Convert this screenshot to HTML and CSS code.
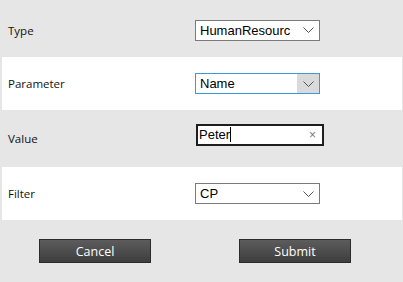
FILE: index.html
```html
<!DOCTYPE html>
<html lang="en">
<head>
  <meta charset="UTF-8">
  <title>Search Filter</title>
  <link rel="stylesheet" href="styles.css">
</head>
<body>
  <div class="panel">
    <div class="row">
      <span class="label">Type</span>
      <div class="select">
        <span class="select-text">HumanResourc</span>
        <span class="arrow">
          <svg width="11" height="6" viewBox="0 0 11 6"><path d="M0.5 0.5 L5.5 5.5 L10.5 0.5" fill="none" stroke="#555" stroke-width="1"/></svg>
        </span>
      </div>
    </div>

    <div class="row row-alt">
      <span class="label">Parameter</span>
      <div class="select select-focus">
        <span class="select-text">Name</span>
        <span class="arrow">
          <svg width="11" height="6" viewBox="0 0 11 6"><path d="M0.5 0.5 L5.5 5.5 L10.5 0.5" fill="none" stroke="#555" stroke-width="1"/></svg>
        </span>
      </div>
    </div>

    <div class="row row-tall">
      <span class="label">Value</span>
      <div class="textbox">
        <span class="textbox-value">Peter</span><span class="caret"></span>
        <span class="clear">&#215;</span>
      </div>
    </div>

    <div class="row row-alt">
      <span class="label">Filter</span>
      <div class="select">
        <span class="select-text">CP</span>
        <span class="arrow">
          <svg width="11" height="6" viewBox="0 0 11 6"><path d="M0.5 0.5 L5.5 5.5 L10.5 0.5" fill="none" stroke="#555" stroke-width="1"/></svg>
        </span>
      </div>
    </div>

    <div class="actions">
      <button class="btn">Cancel</button>
      <button class="btn">Submit</button>
    </div>
  </div>
</body>
</html>
```

FILE: styles.css
```css
body {
  margin: 0;
  background: #e6e6e6;
  font-family: 'Open Sans', 'Liberation Sans', sans-serif;
}

.panel {
  padding: 3px 1px 0 2px;
}

.row {
  display: grid;
  grid-template-columns: 187px auto;
  align-items: center;
  height: 54px;
  padding-left: 6px;
}

.row-alt {
  background: #fff;
  height: 53px;
}

.row-tall {
  height: 57px;
}

.label {
  font-size: 11.5px;
  color: #111;
}

/* fake dropdowns */
.select {
  display: flex;
  align-items: stretch;
  width: 123px;
  height: 19px;
  border: 1px solid #7a7a7a;
  background: #fff;
  font-family: 'Liberation Sans', Arial, sans-serif;
  font-size: 13px;
  color: #000;
}

.select-focus {
  border-color: #3a9ad9;
}

.select-text {
  flex: 1;
  overflow: hidden;
  white-space: nowrap;
  padding: 0 2px 0 4px;
  line-height: 19px;
}

.arrow {
  width: 22px;
  display: flex;
  align-items: center;
  justify-content: center;
}

.select-focus .arrow {
  background: #dadada;
}

/* text input */
.textbox {
  display: flex;
  align-items: center;
  width: 124px;
  height: 16px;
  margin-left: 1px;
  margin-top: -8px;
  border: 2px solid #1e1e1e;
  background: #fff;
  font-family: 'Liberation Sans', Arial, sans-serif;
  font-size: 13px;
  padding: 1px 0;
}

.textbox-value {
  padding-left: 1px;
}

.caret {
  width: 1px;
  height: 15px;
  background: #000;
}

.clear {
  margin-left: auto;
  margin-right: 6px;
  font-size: 12px;
  color: #777;
}

.actions {
  display: flex;
  gap: 88px;
  padding: 19px 0 0 37px;
}

.btn {
  width: 112px;
  height: 24px;
  border: 1px solid #2c2c2c;
  background: linear-gradient(#5c5c5c, #3e3e3e);
  color: #fff;
  font-family: 'Open Sans', 'Liberation Sans', sans-serif;
  font-size: 12.5px;
  padding: 0;
}
```
